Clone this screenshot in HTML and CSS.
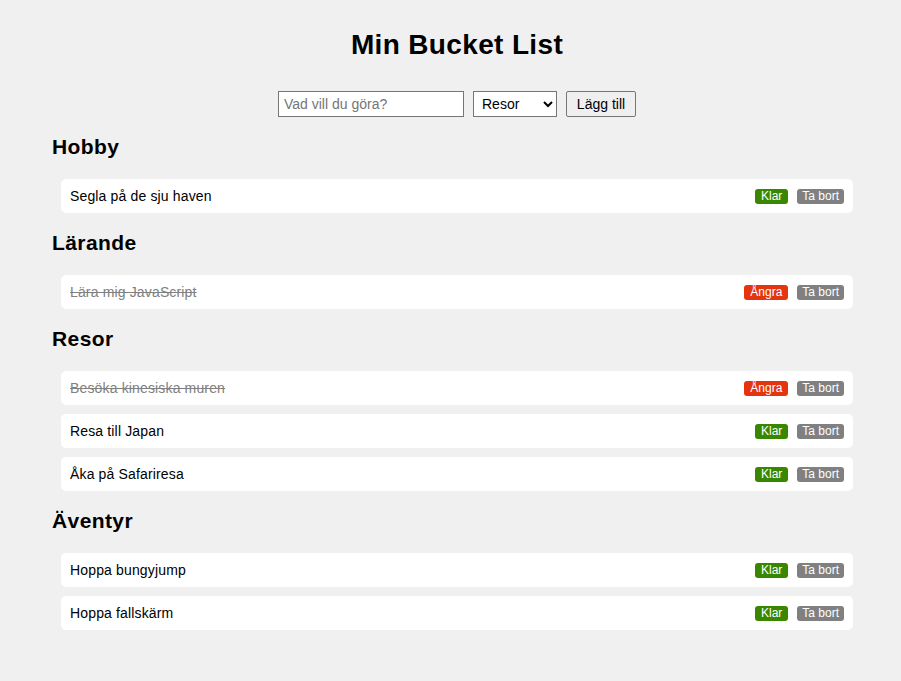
FILE: index.html
```html
<!DOCTYPE html>
<html lang="sv">
<head>
<meta charset="utf-8">
<title>Min Bucket List</title>
<link rel="stylesheet" href="styles.css">
</head>
<body>
<div class="wrap">
  <h1 class="title">Min Bucket List</h1>
  <form class="add-form">
    <input class="add-input" type="text" placeholder="Vad vill du göra?">
    <select class="add-select">
      <option>Hobby</option>
      <option>Lärande</option>
      <option selected>Resor</option>
      <option>Äventyr</option>
    </select>
    <button class="add-btn" type="button">Lägg till</button>
  </form>

  <section class="cat">
    <h2 class="cat-title">Hobby</h2>
    <ul class="list">
      <li class="item"><span class="item-text">Segla på de sju haven</span><span class="actions"><button class="badge badge-done" type="button">Klar</button><button class="badge badge-del" type="button">Ta bort</button></span></li>
    </ul>
  </section>

  <section class="cat">
    <h2 class="cat-title">Lärande</h2>
    <ul class="list">
      <li class="item"><span class="item-text is-done">Lära mig JavaScript</span><span class="actions"><button class="badge badge-undo" type="button">Ångra</button><button class="badge badge-del" type="button">Ta bort</button></span></li>
    </ul>
  </section>

  <section class="cat">
    <h2 class="cat-title">Resor</h2>
    <ul class="list">
      <li class="item"><span class="item-text is-done">Besöka kinesiska muren</span><span class="actions"><button class="badge badge-undo" type="button">Ångra</button><button class="badge badge-del" type="button">Ta bort</button></span></li>
      <li class="item"><span class="item-text">Resa till Japan</span><span class="actions"><button class="badge badge-done" type="button">Klar</button><button class="badge badge-del" type="button">Ta bort</button></span></li>
      <li class="item"><span class="item-text">Åka på Safariresa</span><span class="actions"><button class="badge badge-done" type="button">Klar</button><button class="badge badge-del" type="button">Ta bort</button></span></li>
    </ul>
  </section>

  <section class="cat">
    <h2 class="cat-title">Äventyr</h2>
    <ul class="list">
      <li class="item"><span class="item-text">Hoppa bungyjump</span><span class="actions"><button class="badge badge-done" type="button">Klar</button><button class="badge badge-del" type="button">Ta bort</button></span></li>
      <li class="item"><span class="item-text">Hoppa fallskärm</span><span class="actions"><button class="badge badge-done" type="button">Klar</button><button class="badge badge-del" type="button">Ta bort</button></span></li>
    </ul>
  </section>
</div>
</body>
</html>
```

FILE: styles.css
```css
* { box-sizing: border-box; }

html, body {
  margin: 0;
  padding: 0;
  background: #f0f0f0;
  color: #000;
  font-family: "Liberation Sans", Arial, sans-serif;
  font-size: 14px;
}

.wrap {
  width: 792px;
  margin-left: 61px;
  padding-top: 29px;
}

.title {
  margin: 0;
  text-align: center;
  font-size: 28px;
  font-weight: bold;
  line-height: 32px;
  letter-spacing: 0.35px;
}

.add-form {
  display: flex;
  justify-content: center;
  gap: 9px;
  margin-top: 30px;
}

.add-input,
.add-select,
.add-btn {
  height: 26px;
  font-family: "Liberation Sans", Arial, sans-serif;
  font-size: 14px;
  border: 1px solid #767676;
  margin: 0;
}

.add-input {
  width: 186px;
  padding: 4px 5px;
  background: #fff;
  color: #000;
}

.add-input::placeholder { color: #757575; }

.add-select {
  width: 84px;
  padding: 0 2px 0 4px;
  background: #fff;
  color: #000;
  border-radius: 0;
}

.add-btn {
  width: 70px;
  padding: 0;
  background: #efefef;
  color: #000;
  border-radius: 2px;
}

.cat-title {
  margin: 18px 0 20px -9px;
  font-size: 21px;
  line-height: 24px;
  font-weight: bold;
  letter-spacing: 0.4px;
}

.list {
  list-style: none;
  margin: 0;
  padding: 0;
  display: flex;
  flex-direction: column;
  gap: 9px;
}

.item {
  height: 34px;
  display: flex;
  align-items: center;
  justify-content: space-between;
  padding: 0 9px;
  background: #fff;
  border-radius: 5px;
}

.item-text {
  line-height: 16px;
  letter-spacing: 0.15px;
}

.is-done {
  color: #808080;
  text-decoration: line-through;
}

.actions {
  display: flex;
  gap: 9px;
}

.badge {
  font-family: "Liberation Sans", Arial, sans-serif;
  font-size: 12px;
  line-height: 15px;
  height: 15px;
  padding: 0 5px;
  border: 0;
  border-radius: 3px;
  color: #fff;
  margin: 0;
}

.badge-done { background: #398600; padding: 0 6px; }
.badge-undo { background: #e4350f; padding: 0 6px; }
.badge-del { background: #808080; }
```
